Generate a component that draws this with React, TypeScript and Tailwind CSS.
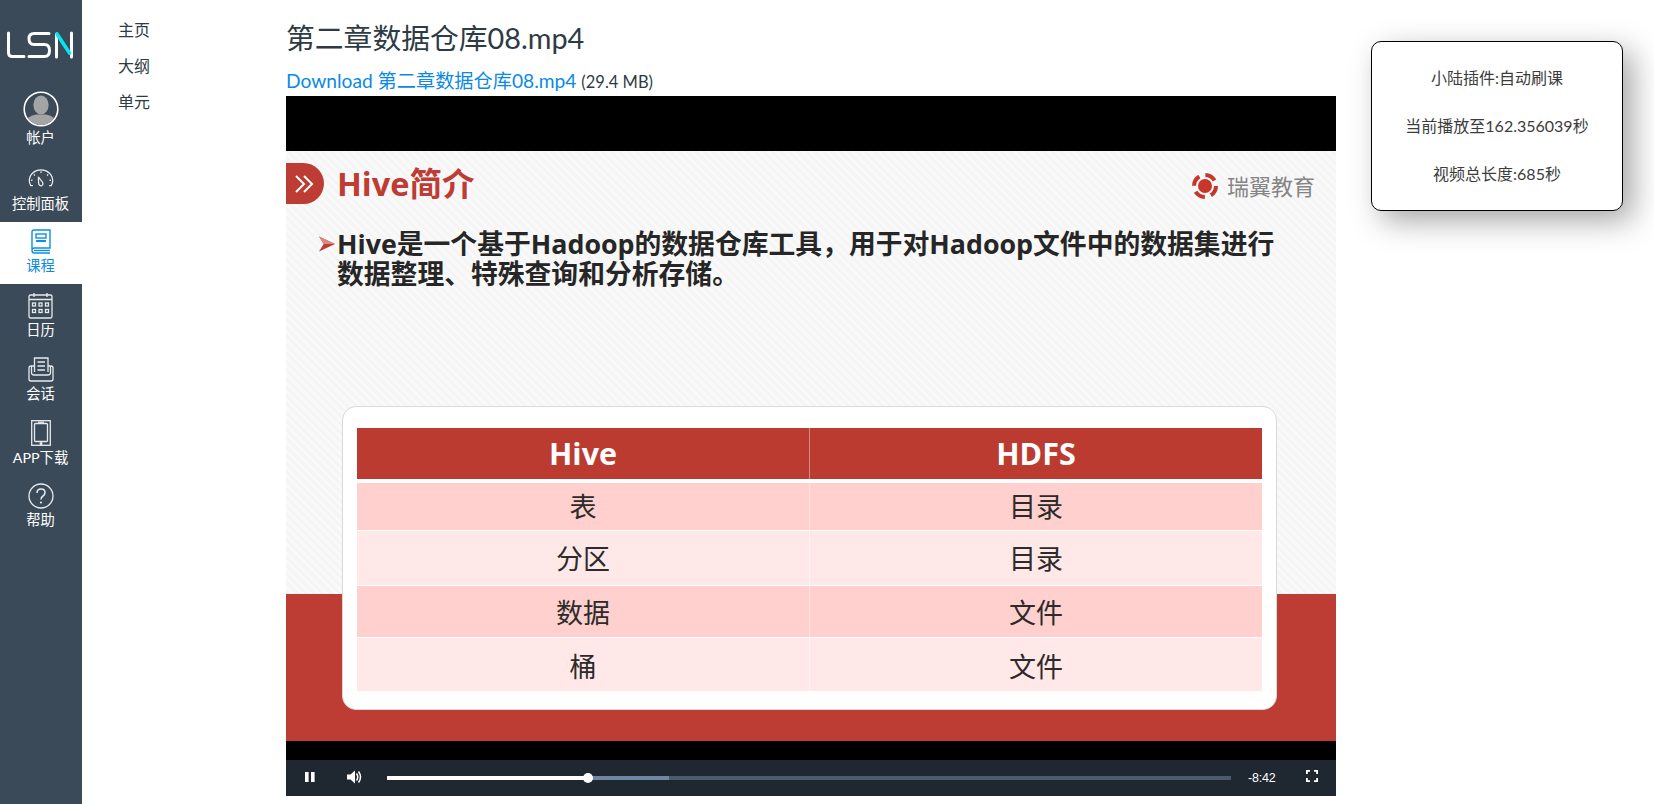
import React from "react";

const ink = "#e6eaed";

function Logo() {
  return (
    <svg width="82" height="30" viewBox="0 29 82 30" fill="none" className="block">
      <path d="M8.5 32V51.5Q8.5 55.5 12.5 55.5H24" stroke="#fff" strokeWidth="3" strokeLinecap="round" />
      <path d="M49 32.5H34Q29 32.5 29 37.5Q29 43.5 34 43.5H44.5Q49.5 43.5 49.5 49.5Q49.5 55.5 44.5 55.5H29" stroke="#fff" strokeWidth="3" strokeLinecap="round" />
      <path d="M56.5 56V33" stroke="#fff" strokeWidth="3" strokeLinecap="round" />
      <path d="M71.5 32V56" stroke="#fff" strokeWidth="3" strokeLinecap="round" />
      <path d="M57 33L69.5 52" stroke="#00e8f0" strokeWidth="3.6" strokeLinecap="round" />
    </svg>
  );
}

function Avatar() {
  return (
    <svg width="36" height="36" viewBox="0 0 36 36">
      <defs>
        <clipPath id="av"><circle cx="18" cy="18" r="16" /></clipPath>
      </defs>
      <circle cx="18" cy="18" r="16.8" fill="#3b4a58" stroke="#fff" strokeWidth="1.6" />
      <g clipPath="url(#av)" fill="#a4a4a4">
        <ellipse cx="18" cy="14" rx="7.6" ry="9.4" />
        <path d="M3 36V29Q5 25.5 13 23.5H23Q31 25.5 33 29V36Z" />
      </g>
    </svg>
  );
}

function Gauge() {
  return (
    <svg width="26" height="18" viewBox="0 0 28 20" fill="none" stroke={ink} strokeWidth="1.4">
      <path d="M5 18.5H2.6Q1 15.5 1 13A13 12 0 0 1 27 13Q27 15.5 25.4 18.5H23" />
      <path d="M14 2.5V4.5M6 6L7.3 7.3M22 6L20.7 7.3M3 12.5H4.5M25 12.5H23.5" />
      <path d="M11.2 9L15.6 14.6Q17 17 15 18.4Q13 19.2 11.8 17.4Q11 15.5 11.2 9Z" strokeLinejoin="round" />
    </svg>
  );
}

function Book() {
  return (
    <svg width="20" height="25" viewBox="0 0 20 25" fill="none" stroke="#0a90e8" strokeWidth="1.4">
      <path d="M1 20V3Q1 1 3 1H19V19H3.5Q1 19 1 21.5Q1 24 3.5 24H19" />
      <path d="M3 21.5H19" />
      <rect x="5" y="5" width="10" height="4" />
      <path d="M5 12H15" strokeWidth="2" />
    </svg>
  );
}

function Calendar() {
  return (
    <svg width="25" height="27" viewBox="0 0 25 27" fill="none" stroke={ink} strokeWidth="1.3">
      <rect x="1" y="3" width="23" height="23" rx="1.5" />
      <path d="M1 7.5H24M6 1V5M19 1V5" />
      <rect x="4.5" y="11" width="3" height="3" />
      <rect x="11" y="11" width="3" height="3" />
      <rect x="17.5" y="11" width="3" height="3" />
      <rect x="4.5" y="17.5" width="3" height="3" />
      <rect x="11" y="17.5" width="3" height="3" />
      <rect x="17.5" y="17.5" width="3" height="3" />
    </svg>
  );
}

function Inbox() {
  return (
    <svg width="26" height="25" viewBox="0 0 26 25" fill="none" stroke={ink} strokeWidth="1.3">
      <path d="M6.5 15V1H20V15" />
      <path d="M9.5 5H17M9.5 9H17M9.5 13H17" strokeWidth="1.5" />
      <path d="M6.5 9H3Q1 9 1 11V22Q1 24 3 24H23Q25 24 25 22V11Q25 9 23 9H20" />
      <path d="M3.5 9V15.5Q3.5 18 6 18H20Q22.5 18 22.5 15.5V9" />
    </svg>
  );
}

function Tablet() {
  return (
    <svg width="20" height="26" viewBox="0 0 20 26" fill="none" stroke={ink} strokeWidth="1.3">
      <rect x="0.7" y="0.7" width="18.6" height="24.6" />
      <rect x="3.5" y="3.5" width="13" height="18" rx="1" />
      <path d="M7 2.2H13" />
      <circle cx="10" cy="23.5" r="0.9" fill={ink} />
    </svg>
  );
}

function Help() {
  return (
    <svg width="26" height="26" viewBox="0 0 26 26" fill="none" stroke={ink} strokeWidth="1.3">
      <circle cx="13" cy="13" r="12" />
      <path d="M9 10Q9 6 13 6Q17 6 17 9.6Q17 11.8 15 13Q13 14.2 13 16.5" strokeWidth="1.5" />
      <circle cx="13" cy="19.5" r="1.1" fill={ink} stroke="none" />
    </svg>
  );
}

function Item(props: { icon: React.ReactNode; label: string; cls: string; box: string; active?: boolean }) {
  return (
    <div className={"flex flex-col items-center pr-[1px] " + props.cls + (props.active ? " bg-white text-[#0a8ae6]" : " text-white")}>
      <div className={"flex justify-center " + props.box}>{props.icon}</div>
      <div className="text-[14.3px] leading-[20px] whitespace-nowrap">{props.label}</div>
    </div>
  );
}

function Sidebar() {
  return (
    <aside className="w-[82px] h-full shrink-0 bg-[#3b4a58] flex flex-col pt-[30px]">
      <div className="h-[61px]"><Logo /></div>
      <Item cls="h-[69px]" box="h-[37px]" icon={<Avatar />} label="帐户" />
      <Item cls="h-[62px] pt-[9px]" box="h-[25px] items-start" icon={<Gauge />} label="控制面板" />
      <Item active cls="h-[62px] pt-[7px]" box="h-[27px] items-start" icon={<Book />} label="课程" />
      <Item cls="h-[64px] pt-[8px]" box="h-[28px] items-start" icon={<Calendar />} label="日历" />
      <Item cls="h-[64px] pt-[9px]" box="h-[27px] items-start" icon={<Inbox />} label="会话" />
      <Item cls="h-[64px] pt-[8px]" box="h-[28px] items-start" icon={<Tablet />} label="APP下载" />
      <Item cls="h-[62px] pt-[7px]" box="h-[27px] items-start" icon={<Help />} label="帮助" />
    </aside>
  );
}

function CourseNav() {
  return (
    <nav className="w-[204px] shrink-0 pl-[36px] pt-[12px] text-[16px] leading-[36px] text-[#2d3b45]">
      <div>主页</div>
      <div>大纲</div>
      <div>单元</div>
    </nav>
  );
}

function BrandMark() {
  return (
    <svg width="28" height="28" viewBox="0 0 28 28" fill="none">
      <circle cx="14" cy="14" r="7" fill="#c8352b" />
      <circle cx="14" cy="14" r="11" stroke="#c8352b" strokeWidth="4" strokeDasharray="11 6.3" />
    </svg>
  );
}

function SlideHeader() {
  return (
    <div className="flex items-center h-[41px]">
      <div className="w-[38px] h-[41px] bg-[#bd3c33] rounded-r-full flex items-center justify-center">
        <svg width="22" height="20" viewBox="0 0 22 20" fill="none" stroke="#fff" strokeWidth="2">
          <path d="M2 2L10 10L2 18M10 2L18 10L10 18" />
        </svg>
      </div>
      <div className="ml-[13px] text-[32.5px] font-bold text-[#bd3c33] leading-[41px]">Hive简介</div>
      <div className="ml-auto mr-[21px] flex items-center gap-[8px] mt-[4px]">
        <BrandMark />
        <span className="text-[22px] text-[#858585] leading-[28px]">瑞翼教育</span>
      </div>
    </div>
  );
}

function Row(props: { a: string; b: string; cls: string; pad?: string; header?: boolean }) {
  const text = props.header ? "font-bold text-white text-[30.5px]" : "text-[#2b2b2b] text-[27px]";
  const pad = props.pad ?? "";
  return (
    <div className={"grid grid-cols-[453px_1fr] " + props.cls}>
      <div className={"flex items-center justify-center border-r border-white/40 " + text + " " + pad}>{props.a}</div>
      <div className={"flex items-center justify-center " + text + " " + pad}>{props.b}</div>
    </div>
  );
}

function Slide() {
  return (
    <div className="relative h-[590px] pt-[12px] bg-[repeating-linear-gradient(45deg,#f9f9f9_0px,#f9f9f9_3px,#f5f5f5_3px,#f5f5f5_6px)] [font-family:'Open_Sans','Noto_Sans_CJK_SC',sans-serif]">
      <div className="absolute left-0 right-0 bottom-0 h-[147px] bg-[#bd3c33]" />
      <SlideHeader />
      <div className="relative flex mt-[25px] pl-[32px] pr-[40px]">
        <svg width="19" height="18" viewBox="0 0 20 18" className="shrink-0 mt-[6px]">
          <path d="M1 1L18 9L1 17L6 9Z" fill="#bd3c33" />
          <path d="M1 1L18 9L6 9Z" fill="#d98a84" />
        </svg>
        <div className="text-[26.8px] font-bold leading-[30px] text-[#262626] whitespace-nowrap">
          Hive是一个基于Hadoop的数据仓库工具，用于对Hadoop文件中的数据集进行
          <br />
          数据整理、特殊查询和分析存储。
        </div>
      </div>
      <div className="relative mt-[117px] ml-[56px] w-[935px] h-[304px] bg-white border border-[#d9d9d9] rounded-[14px] pt-[21px] px-[14px]">
        <Row header a="Hive" b="HDFS" pad="pt-[1px]" cls="h-[51px] bg-[#bb3b30]" />
        <Row a="表" b="目录" pad="pt-[2px]" cls="h-[47px] mt-[4px] bg-[#ffd0cd]" />
        <Row a="分区" b="目录" pad="pt-[2px]" cls="h-[54px] mt-[1px] bg-[#ffe8e7]" />
        <Row a="数据" b="文件" pad="pt-[4px]" cls="h-[51px] mt-[1px] bg-[#ffd0cd]" />
        <Row a="桶" b="文件" pad="pt-[6px]" cls="h-[53px] mt-[1px] bg-[#ffe8e7]" />
      </div>
    </div>
  );
}

function Controls() {
  return (
    <div className="h-[36px] bg-[#1f2730] flex items-center text-white">
      <svg width="10" height="10" viewBox="0 0 10 10" fill="#fff" className="ml-[19px] mb-[3px]">
        <rect x="0" y="0" width="3.6" height="10" />
        <rect x="6" y="0" width="3.6" height="10" />
      </svg>
      <svg width="16" height="14" viewBox="0 0 16 14" fill="none" className="ml-[32px] mb-[3px]">
        <path d="M0 4.5H3.5L8 0.5V13.5L3.5 9.5H0Z" fill="#fff" />
        <path d="M9.5 3.5Q12 7 9.5 10.5M11.5 1.5Q15.5 7 11.5 12.5" stroke="#fff" strokeWidth="1.5" />
      </svg>
      <div className="relative ml-[24px] w-[844px] h-[4px] bg-[#4d5a6d]">
        <div className="absolute left-0 top-0 h-full w-[282px] bg-[#6f87a3]" />
        <div className="absolute left-0 top-0 h-full w-[200px] bg-white" />
        <div className="absolute left-[196px] top-[-3px] w-[10px] h-[10px] rounded-full bg-white" />
      </div>
      <div className="ml-[17px] w-[29px] text-[12.5px] leading-[14px] font-['Liberation_Sans',sans-serif] tracking-[-0.2px] whitespace-nowrap">-8:42</div>
      <svg width="12" height="12" viewBox="0 0 12 12" fill="none" stroke="#fff" strokeWidth="1.8" className="ml-[29px] mb-[5px]">
        <path d="M0.9 4V0.9H4M8 0.9H11.1V4M11.1 8V11.1H8M4 11.1H0.9V8" />
      </svg>
    </div>
  );
}

function Content() {
  return (
    <main className="w-[1050px] shrink-0 pt-[19px]">
      <h1 className="text-[28.8px] leading-[38px] font-normal text-[#2d3b45]">第二章数据仓库08.mp4</h1>
      <div className="mt-[9px] h-[30px] leading-[30px] whitespace-nowrap">
        <span className="text-[19.2px] text-[#0a8ae6]">Download 第二章数据仓库08.mp4</span>
        <span className="ml-[5px] text-[16.5px] text-[#2d3b45]">(29.4 MB)</span>
      </div>
      <div className="h-[55px] bg-black" />
      <Slide />
      <div className="h-[19px] bg-black" />
      <Controls />
    </main>
  );
}

function Popup() {
  return (
    <div className="w-[252px] h-[170px] ml-[35px] mt-[41px] shrink-0 bg-white border border-black rounded-[10px] shadow-[10px_10px_30px_rgba(0,0,0,0.35)] flex flex-col items-center pt-[26px] gap-[28px] text-[16px] leading-[20px] text-[#3c3c3c]">
      <div>小陆插件:自动刷课</div>
      <div>当前播放至162.356039秒</div>
      <div>视频总长度:685秒</div>
    </div>
  );
}

export default function App() {
  return (
    <div className="flex h-screen overflow-hidden bg-white [font-family:Lato,'Noto_Sans_CJK_SC',sans-serif]">
      <Sidebar />
      <CourseNav />
      <Content />
      <Popup />
    </div>
  );
}
